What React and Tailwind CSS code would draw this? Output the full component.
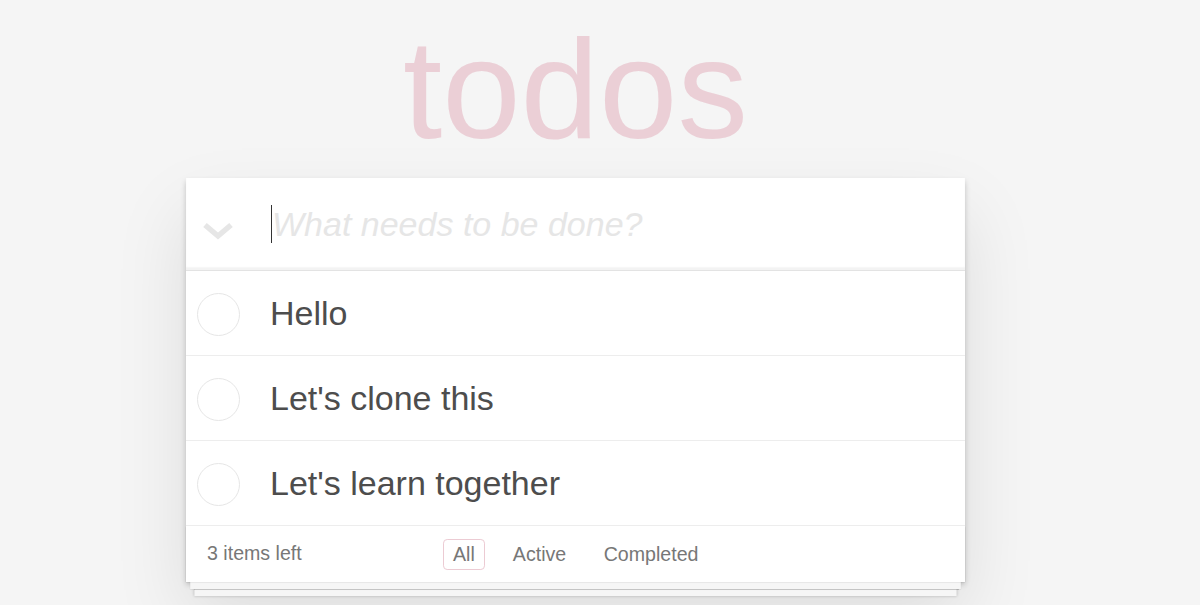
export default function App() {
  const todos = ["Hello", "Let's clone this", "Let's learn together"];
  return (
    <div className="h-[605px] overflow-hidden bg-[#f5f5f5] font-['Liberation_Sans',Arial,sans-serif] text-[#4d4d4d]">
      <div className="ml-[186px] w-[779px]">
        <h1 className="h-[178px] pt-[19px] text-center text-[141px] leading-[140px] font-normal text-[#ebcfd6]">
          todos
        </h1>
        <div className="bg-white shadow-[0_2.8px_5.6px_0_rgba(0,0,0,0.2),0_35px_70px_0_rgba(0,0,0,0.1)]">
          <div className="flex h-[93px] items-center border-b border-[#e3e3e3] shadow-[inset_0_-2.8px_1.4px_rgba(0,0,0,0.05)]">
            <div className="mt-[15px] flex w-[84px] flex-none pl-[16px]">
              <svg width="32" height="19" viewBox="0 0 32 19">
                <polyline points="3,3 16,14 29,3" fill="none" stroke="#e6e6e6" strokeWidth="5.5" />
              </svg>
            </div>
            <div className="ml-[1px] h-[38px] w-px flex-none bg-[#333]" />
            <span className="text-[34px] italic leading-[47px] text-[#e6e6e6]">What needs to be done?</span>
          </div>
          <ul>
            {todos.map((t) => (
              <li key={t} className="flex h-[85px] items-center gap-[30px] border-b border-[#ededed] pl-[11px]">
                <div className="mt-[2px] h-[43px] w-[43px] flex-none rounded-full border border-[#e6e6e6]" />
                <span className="text-[34px] leading-[40px]">{t}</span>
              </li>
            ))}
          </ul>
          <div className="grid h-[56px] grid-cols-[1fr_auto_1fr] items-center text-[19.6px] text-[#777] shadow-[0_1.4px_1.4px_rgba(0,0,0,0.2),0_11.2px_0_-4.2px_#f6f6f6,0_12.6px_1.4px_-4.2px_rgba(0,0,0,0.2),0_22.4px_0_-8.4px_#f6f6f6,0_23.8px_2.8px_-8.4px_rgba(0,0,0,0.2)]">
            <span className="pl-[21px]">3 items left</span>
            <div className="flex gap-[17px]">
              <span className="rounded-[4.2px] border-[1.4px] border-[#eccbd3] px-[9.5px] py-[4px] leading-[21px]">All</span>
              <span className="rounded-[4.2px] border-[1.4px] border-transparent px-[9.5px] py-[4px] leading-[21px]">Active</span>
              <span className="rounded-[4.2px] border-[1.4px] border-transparent px-[9px] py-[4px] leading-[21px]">Completed</span>
            </div>
            <span />
          </div>
        </div>
      </div>
    </div>
  );
}
